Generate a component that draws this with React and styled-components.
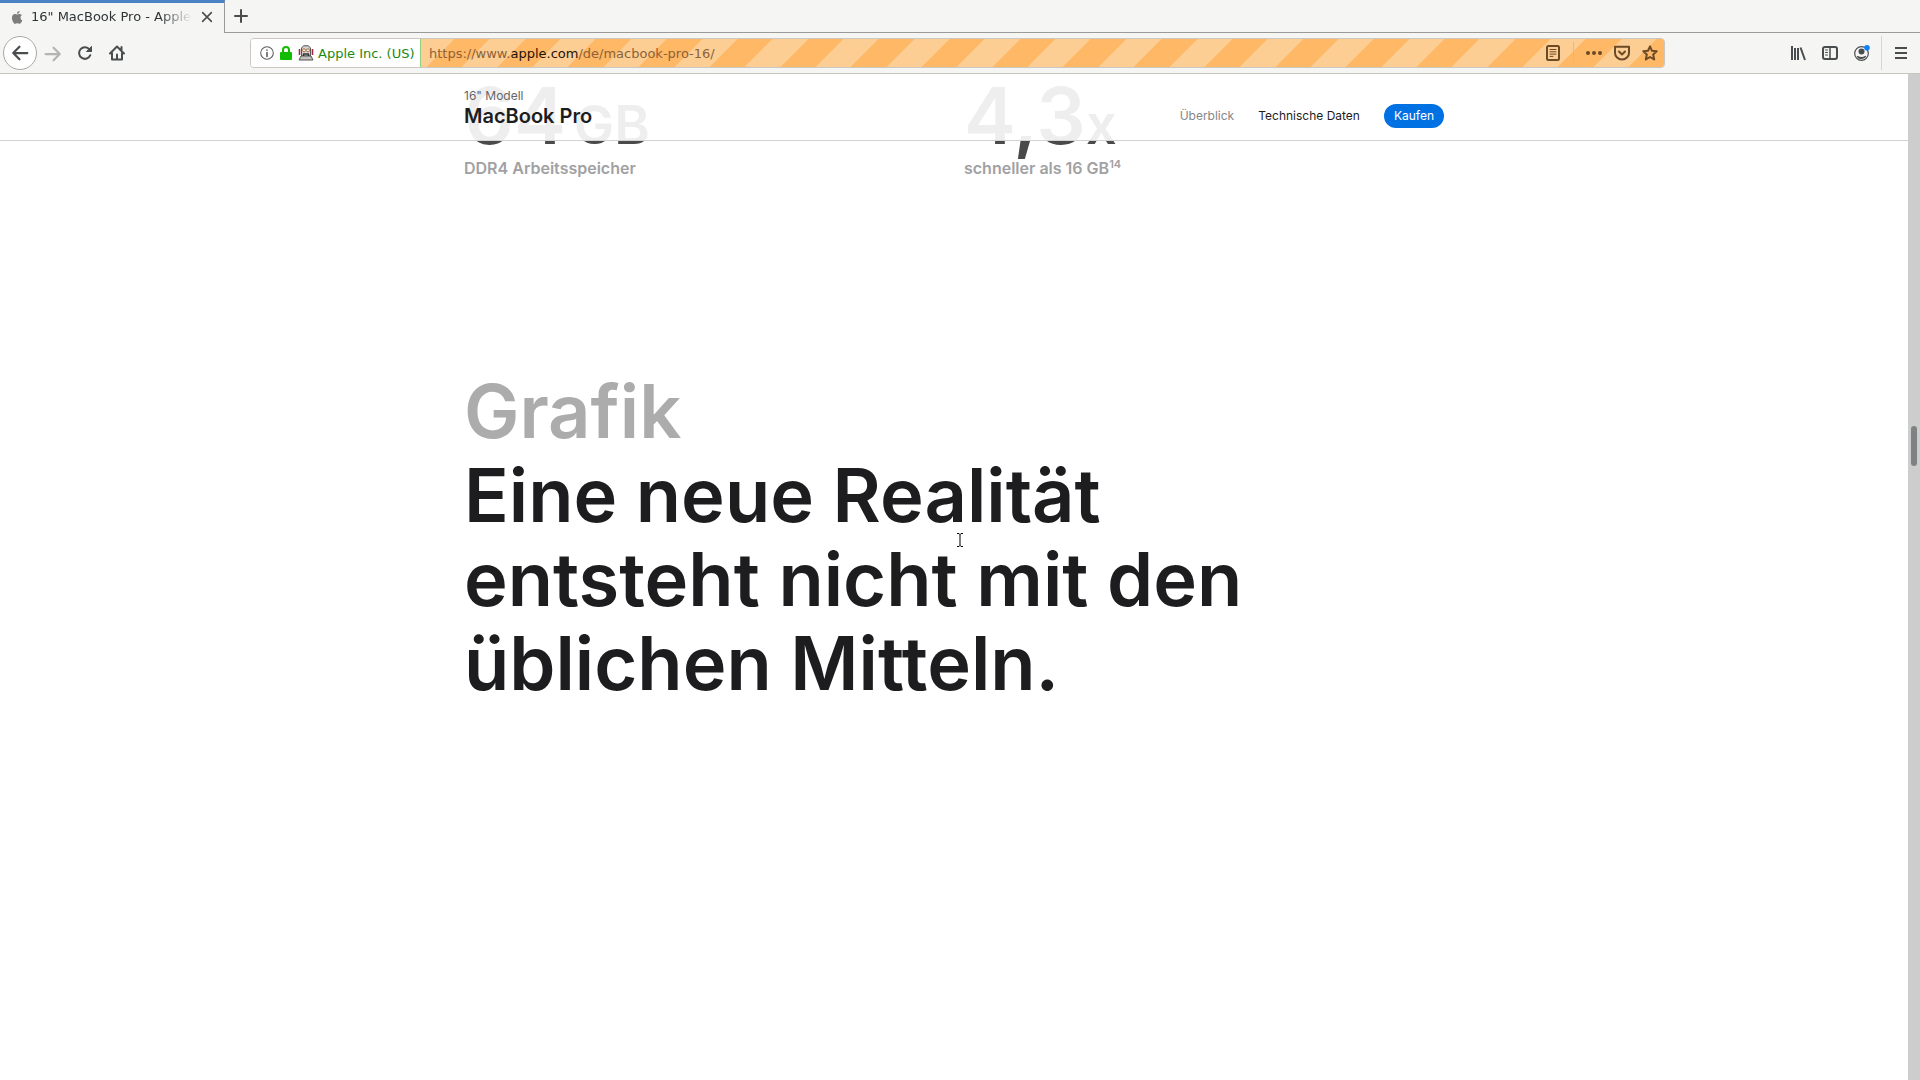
import React from 'react';
import styled, { createGlobalStyle, css } from 'styled-components';

const ui = '"Inter", "Liberation Sans", sans-serif';
const chrome = '"DejaVu Sans", sans-serif';

const Global = createGlobalStyle`
  *, *::before, *::after { box-sizing: border-box; }
  html, body { margin: 0; height: 100%; }
  #root { height: 100%; }
  body { overflow: hidden; background: #fff; }
  h1, h2, p, dl, dt, dd { margin: 0; }
  button, input { font: inherit; color: inherit; border: 0; background: none; padding: 0; margin: 0; }
  a { color: inherit; text-decoration: none; }
`;

const Window = styled.div`
  display: flex;
  flex-direction: column;
  height: 100vh;
  font-family: ${ui};
`;

/* Browser chrome */
const TabStrip = styled.div`
  display: flex;
  flex: none;
  height: 33px;
  background: #f5f5f4;
  font: 13px ${chrome};
  color: #2e3436;
`;
const Tab = styled.div`
  display: flex;
  align-items: center;
  width: 225px;
  padding: 0 9px 3px 10px;
  gap: 7px;
  border-top: 3px solid #4a82c4;
  border-right: 1px solid #9a9a98;
`;
const TabTitle = styled.span`
  flex: 1;
  overflow: hidden;
  white-space: nowrap;
  mask-image: linear-gradient(to left, transparent, #000 32px);
`;
const StripRest = styled.div`
  display: flex;
  align-items: center;
  flex: 1;
  padding-left: 8px;
  border-bottom: 1px solid #9a9a98;
`;
const IconButton = styled.button`
  display: grid;
  place-items: center;
  flex: none;
  width: ${p => p.$w || 16}px;
  height: ${p => p.$h || 16}px;
  color: ${p => p.$color || '#4a4d4e'};
  ${p => p.$round && css`
    border: 1px solid #a9a9a7;
    border-radius: 50%;
    background: #fff;
  `}
`;
const Toolbar = styled.div`
  display: flex;
  align-items: center;
  flex: none;
  height: 41px;
  padding: 0 3px;
  background: #f5f5f4;
  border-bottom: 1px solid #c8c5c2;
  font: 13px ${chrome};
`;
const NavButtons = styled.div`
  display: flex;
  align-items: center;
  width: 247px;
`;
const AddressBar = styled.div`
  display: flex;
  flex: 1;
  height: 30px;
  border: 1px solid #cdc7c2;
  border-radius: 4px;
  overflow: hidden;
`;
const Identity = styled.button`
  display: flex;
  align-items: center;
  gap: 4px;
  width: 169px;
  padding-left: 9px;
  background: #fff;
  color: #1b8a13;
  white-space: nowrap;
`;
const UrlField = styled.div`
  display: flex;
  align-items: center;
  flex: 1;
  padding: 0 6px 0 8px;
  border-left: 1px solid #8fd07f;
  background: repeating-linear-gradient(-45deg, #ffb866 0 25px, #fdce94 25px 50px);
  color: #6b4a26;
`;
const Url = styled.a`
  flex: 1;
  color: #8c6236;
  b { font-weight: 400; color: #1d1206; }
`;
const UrlActions = styled.div`
  display: flex;
  align-items: center;
  gap: 12px;
`;
const Divider = styled.span`
  width: 1px;
  height: ${p => p.$h}px;
  background: ${p => p.$color};
`;
const ToolActions = styled.div`
  display: flex;
  align-items: center;
  justify-content: flex-end;
  gap: 11px;
  width: 252px;
  padding-right: 8px;
`;
const ToolGroup = styled.div`
  display: flex;
  gap: 16px;
`;

/* Web page */
const Viewport = styled.div`
  display: flex;
  flex: 1;
  min-height: 0;
`;
const Page = styled.div`
  flex: 1;
  overflow: hidden;
  background: #fff;
`;
const ScrollTrack = styled.div`
  flex: none;
  width: 12px;
  padding: 352px 3px 0;
  background: #cdcdcd;
`;
const ScrollThumb = styled.div`
  height: 40px;
  border-radius: 3px;
  background: #7e8282;
`;
const Column = styled.div`
  width: 100%;
  max-width: 980px;
  margin: 0 auto;
`;
const LocalNav = styled.header`
  position: sticky;
  top: 0;
  z-index: 2;
  height: 67px;
  background: rgba(255, 255, 255, 0.91);
  border-bottom: 1px solid #d2d2d2;
`;
const NavInner = styled(Column)`
  display: flex;
  align-items: flex-end;
  justify-content: space-between;
  height: 100%;
  padding-bottom: 12px;
`;
const Eyebrow = styled.p`
  font-size: 12px;
  line-height: 16px;
  color: #666;
`;
const Product = styled.p`
  font-size: 20px;
  line-height: 24px;
  font-weight: 600;
  color: #1d1d1f;
`;
const NavLinks = styled.nav`
  display: flex;
  align-items: center;
  gap: 24px;
  font-size: 12px;
  line-height: 24px;
  color: #1d1d1f;
`;
const NavLink = styled.a`
  color: ${p => (p.$current ? '#868688' : '#1d1d1f')};
`;
const BuyLink = styled.a`
  padding: 0 10px;
  border-radius: 12px;
  background: #0071e3;
  color: #fff;
`;
const Stats = styled.dl`
  display: grid;
  grid-template-columns: 500px 1fr;
  margin-top: -67px;
`;
const Stat = styled.div`
  display: flex;
  flex-direction: column-reverse;
`;
const StatValue = styled.dd`
  font-size: 78px;
  line-height: 84px;
  font-weight: 600;
  color: #4a4a4c;
  white-space: nowrap;
  small { font-size: 54px; line-height: 0; }
`;
const Unit = styled.small`
  margin-left: 8px;
`;
const StatLabel = styled.dt`
  font-size: 16px;
  line-height: 20px;
  font-weight: 600;
  color: #a1a1a3;
  sup { font-size: 11px; line-height: 0; }
`;
const Headline = styled.h2`
  max-width: 820px;
  margin-top: 191px;
  font-size: 74px;
  line-height: 84px;
  font-weight: 600;
  color: #1d1d1f;
  span { display: block; color: #acacac; }
`;
const TextCursor = styled.svg`
  position: fixed;
  left: 956px;
  top: 533px;
`;

const Svg = ({ s = 16, children, ...r }) => (
  <svg width={s} height={s} viewBox="0 0 16 16" fill="none" stroke="currentColor" strokeWidth="2" strokeLinecap="round" strokeLinejoin="round" aria-hidden="true" {...r}>{children}</svg>
);
const Apple = () => (
  <Svg s={14} fill="#7d7d7d" stroke="none"><path d="M11.2 8.5c0-1.7 1.4-2.5 1.5-2.6-.9-1.2-2.1-1.4-2.6-1.4-1.100-.1-2.100.7-2.700.7-.6 0-1.400-.7-2.400-.6-1.200 0-2.400.7-3 1.800-1.300 2.300-.3 5.700.9 7.500.6.9 1.300 1.900 2.300 1.900.9 0 1.300-.6 2.400-.6s1.400.6 2.400.6 1.600-.9 2.200-1.800c.7-1 1-2 1-2.100 0 0-2-.7-2-3.400zM9.400 3.300c.5-.6.8-1.500.7-2.300-.7 0-1.600.5-2.100 1.100-.5.500-.9 1.400-.8 2.200.8.100 1.700-.4 2.200-1z" transform="translate(.8 0)" /></Svg>
);

export default function App() {
  return (
    <Window>
      <Global />
      <TabStrip>
        <Tab>
          <Apple />
          <TabTitle>16" MacBook Pro - Apple</TabTitle>
          <IconButton aria-label="Tab schließen"><Svg s={14} strokeWidth="1.800"><path d="M3 3l10 10M13 3L3 13" /></Svg></IconButton>
        </Tab>
        <StripRest>
          <IconButton aria-label="Neuer Tab"><Svg><path d="M8 2v12M2 8h12" /></Svg></IconButton>
        </StripRest>
      </TabStrip>
      <Toolbar>
        <NavButtons>
          <IconButton $round $w={34} $h={34} aria-label="Zurück"><Svg s={18}><path d="M14.500 8H2M7.500 2.500L2 8l5.500 5.500" /></Svg></IconButton>
          <IconButton $w={32} $color="#b4b4b3" aria-label="Vor"><Svg s={18}><path d="M1.500 8H14M8.500 2.500L14 8l-5.500 5.500" /></Svg></IconButton>
          <IconButton $w={32} aria-label="Neu laden"><Svg><path d="M13.300 10.200A5.800 5.800 0 1 1 12.500 4.500L14 6" /><path d="M14.500 1.800v4.700H9.800z" fill="currentColor" strokeWidth="1" /></Svg></IconButton>
          <IconButton $w={32} aria-label="Startseite"><Svg><path d="M1 8.500L8 1.500l7 7M3 8v6.500h10V8M12.500 2v3" /><path d="M8 14V9.500" /></Svg></IconButton>
        </NavButtons>
        <AddressBar>
          <Identity>
            <Svg s={14} strokeWidth="1.200" color="#5c5c5c"><circle cx="8" cy="8" r="7.200" /><path d="M8 7.500V12M8 4.500v.3" strokeWidth="1.800" /></Svg>
            <Svg fill="#12bc00" stroke="none"><rect x="2" y="7" width="12" height="8" rx="1" /><path d="M5 8V5a3 3 0 0 1 6 0V8" fill="none" stroke="#12bc00" /></Svg>
            <Svg strokeWidth="1" strokeLinecap="butt" color="#555"><path d="M1.500 4v6M14.500 4v6" stroke="#a3283c" strokeWidth="1.600" /><path d="M3.500 3L5.500 .8h5L12.500 3v8h-9z" fill="#d8d4d0" /><path d="M1 15l2-4h10l2 4z" fill="#c4c2c0" /><circle cx="6" cy="5.300" r="1.500" fill="#fff" stroke="#a46a40" /><circle cx="10" cy="5.300" r="1.500" fill="#fff" stroke="#a46a40" /><path d="M5.500 11V9h5v2" stroke="#333" strokeWidth="1.400" /></Svg>
            Apple Inc. (US)
          </Identity>
          <UrlField>
            <Url href="#top">https://www.<b>apple.com</b>/de/macbook-pro-16/</Url>
            <UrlActions>
              <IconButton $color="#6b4a26" aria-label="Leseansicht"><Svg><rect x="2" y="1" width="12" height="14" rx="1.500" /><path d="M5 4.500h6M5 6.800h6M5 9.100h6M5 11.400h3" strokeWidth="1" /></Svg></IconButton>
              <Divider $h={22} $color="#dfb98c" />
              <IconButton $color="#6b4a26" aria-label="Weitere Aktionen"><Svg fill="currentColor" stroke="none"><circle cx="2" cy="8" r="2" /><circle cx="8" cy="8" r="2" /><circle cx="14" cy="8" r="2" /></Svg></IconButton>
              <IconButton $color="#6b4a26" aria-label="Pocket"><Svg><path d="M1 1.800h14V8A7 6.500 0 0 1 1 8z" /><path d="M5 6.500l3 3 3-3" /></Svg></IconButton>
              <IconButton $color="#6b4a26" aria-label="Lesezeichen"><Svg><path d="M8 1.300l2 4.500 4.700.5-3.500 3.300 1 4.900L8 12l-4.200 2.500 1-4.900L1.300 6.300 6 5.800z" /></Svg></IconButton>
            </UrlActions>
          </UrlField>
        </AddressBar>
        <ToolActions>
          <ToolGroup>
            <IconButton aria-label="Bibliothek"><Svg strokeLinecap="butt"><path d="M2 1v14M5 3v12M8 3v12M10.500 2.500L15 15" /></Svg></IconButton>
            <IconButton aria-label="Seitenleiste"><Svg><rect x="1" y="2" width="14" height="12" rx="2" /><path d="M8 2v12" strokeWidth="1.500" /><path d="M3.500 5h2M3.500 7.500h2M3.500 10h2" strokeWidth="1" /></Svg></IconButton>
            <IconButton aria-label="Konto"><Svg strokeWidth="1.200"><circle cx="7.500" cy="8.500" r="6.800" /><circle cx="7.500" cy="6.500" r="3" fill="currentColor" stroke="none" /><path d="M3.500 11.500c2 1 6 1 8 0-1 2-7 2.800-8 0z" fill="currentColor" /><circle cx="13" cy="2.800" r="2.800" fill="#0a84ff" stroke="none" /></Svg></IconButton>
          </ToolGroup>
          <Divider $h={34} $color="#d6d5d3" />
          <IconButton aria-label="Menü"><Svg strokeLinecap="butt"><path d="M2 3h12M2 8h12M2 13h12" /></Svg></IconButton>
        </ToolActions>
      </Toolbar>
      <Viewport>
        <Page>
          <LocalNav>
            <NavInner>
              <div>
                <Eyebrow>16" Modell</Eyebrow>
                <Product>MacBook Pro</Product>
              </div>
              <NavLinks>
                <NavLink $current href="#overview">Überblick</NavLink>
                <NavLink href="#specs">Technische Daten</NavLink>
                <BuyLink href="#buy">Kaufen</BuyLink>
              </NavLinks>
            </NavInner>
          </LocalNav>
          <Column as="main">
            <Stats>
              <Stat>
                <StatLabel>DDR4 Arbeitsspeicher</StatLabel>
                <StatValue>64<Unit>GB</Unit></StatValue>
              </Stat>
              <Stat>
                <StatLabel>schneller als 16 GB<sup>14</sup></StatLabel>
                <StatValue>4,3<small>x</small></StatValue>
              </Stat>
            </Stats>
            <Headline><span>Grafik</span>Eine neue Realität entsteht nicht mit den üblichen Mitteln.</Headline>
          </Column>
        </Page>
        <ScrollTrack><ScrollThumb /></ScrollTrack>
      </Viewport>
      <TextCursor width="8" height="14" viewBox="0 0 8 14" fill="none" stroke="#000" aria-hidden="true"><path d="M1 .5h2l1 1 1-1h2M4 1v12M1 13.500h2l1-1 1 1h2" /></TextCursor>
    </Window>
  );
}
